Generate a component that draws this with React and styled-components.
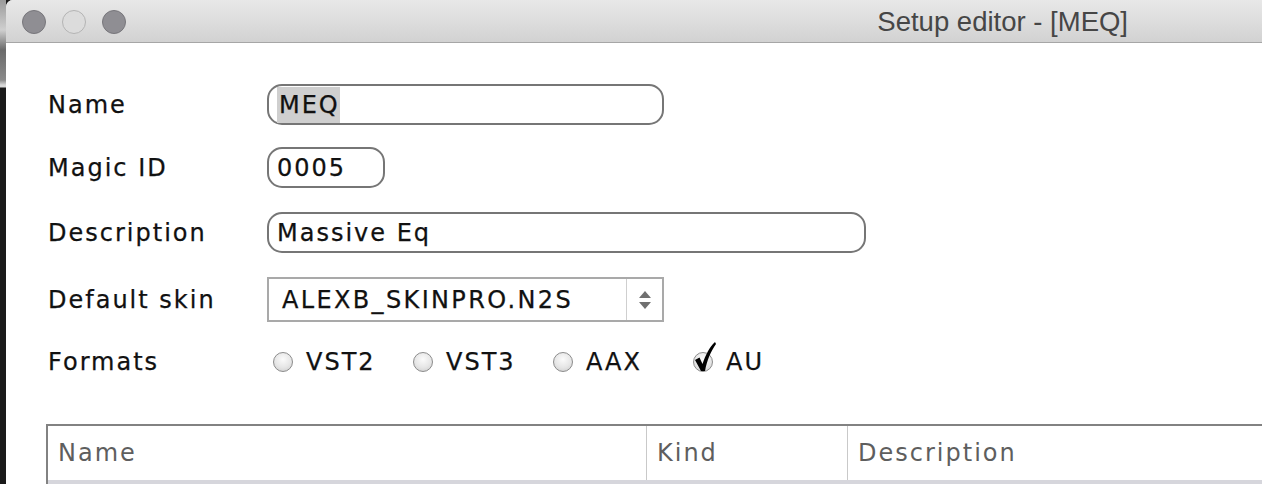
import React from "react";
import styled, { createGlobalStyle } from "styled-components";

const GlobalStyle = createGlobalStyle`
  html, body {
    margin: 0;
    padding: 0;
    background: #1a1a1a;
    overflow: hidden;
  }
  #root {
    width: 1262px;
    height: 484px;
  }
`;

const Screen = styled.div`
  display: flex;
  width: 1262px;
  height: 484px;
  overflow: hidden;
`;

const Edge = styled.div`
  width: 6px;
  flex: none;
  background: linear-gradient(
    to bottom,
    #9a9a9a 0px,
    #cfcfcf 30px,
    #6a6a6a 50px,
    #8a8a8a 80px,
    #d8d8d8 85px,
    #d8d8d8 87px,
    #1a1a1a 88px
  );
`;

const Window = styled.div`
  flex: 1;
  display: flex;
  flex-direction: column;
  background: #ffffff;
  border-top-left-radius: 7px;
  overflow: hidden;
  font-family: "DejaVu Sans", Verdana, sans-serif;
`;

const TitleBar = styled.div`
  box-sizing: border-box;
  height: 43px;
  flex: none;
  display: flex;
  align-items: center;
  padding: 2px 0 0 16px;
  background: linear-gradient(to bottom, #e8e8e8, #d2d2d2);
  border-bottom: 1px solid #a6a6a6;
`;

const Lights = styled.div`
  display: flex;
  gap: 16px;
`;

const Light = styled.div`
  box-sizing: border-box;
  width: 24px;
  height: 24px;
  border-radius: 50%;
  background: ${(p) => (p.$off ? "#dcdcdc" : "#8f8e93")};
  border: 1px solid ${(p) => (p.$off ? "#b4b4b4" : "#77767b")};
`;

const Title = styled.div`
  margin-left: auto;
  padding-right: 134px;
  font-family: "Liberation Sans", Arial, sans-serif;
  font-size: 27.5px;
  color: #464646;
`;

const Body = styled.div`
  padding: 41px 0 0 42px;
  display: flex;
  flex-direction: column;
`;

const Row = styled.div`
  display: flex;
  align-items: center;
  height: ${(p) => p.$h ?? 41}px;
  margin-bottom: ${(p) => p.$gap ?? 23}px;
`;

const Label = styled.div`
  width: 219px;
  flex: none;
  font-size: 24px;
  letter-spacing: 2px;
  color: #111;
  -webkit-text-stroke: 0.25px #111;
`;

const Field = styled.div`
  box-sizing: border-box;
  width: ${(p) => p.$w}px;
  height: 100%;
  border: 2px solid #767676;
  border-radius: 15px;
  display: flex;
  align-items: center;
  padding-left: 8px;
  font-size: 24px;
  letter-spacing: 2px;
  color: #111;
  -webkit-text-stroke: 0.25px #111;
`;

const Selected = styled.span`
  background: #cfcfcf;
  padding: 4px 0 4px 2px;
`;

const Combo = styled.div`
  box-sizing: border-box;
  width: 397px;
  height: 100%;
  border: 2px solid #a9a9a9;
  display: flex;
  align-items: stretch;
`;

const ComboText = styled.div`
  flex: 1;
  display: flex;
  align-items: center;
  padding-left: 13px;
  font-size: 24px;
  letter-spacing: 2.35px;
  color: #111;
  -webkit-text-stroke: 0.25px #111;
`;

const ComboArrows = styled.div`
  width: 35px;
  border-left: 1px solid #cfcfcf;
  display: flex;
  align-items: center;
  justify-content: center;
`;

const Options = styled.div`
  display: flex;
  align-items: center;
  padding-left: 6px;
`;

const Option = styled.div`
  display: flex;
  align-items: center;
  gap: 13px;
  width: ${(p) => p.$w || 140}px;
  font-size: 24px;
  letter-spacing: 2px;
  color: #111;
  -webkit-text-stroke: 0.25px #111;
`;

const Radio = styled.div`
  position: relative;
  width: 20px;
  height: 20px;
  box-sizing: border-box;
  border-radius: 50%;
  border: 1px solid #8c8c8c;
  background: radial-gradient(circle at 50% 35%, #fbfbfb 0%, #e6e6e6 55%, #c9c9c9 100%);
  flex: none;
`;

const Tick = styled.svg`
  position: absolute;
  left: -1px;
  top: -12px;
`;

const Table = styled.div`
  margin-top: 47px;
  margin-left: -2px;
  width: 1300px;
  border-top: 2px solid #828282;
  border-left: 2px solid #828282;
`;

const HeaderRow = styled.div`
  display: grid;
  grid-template-columns: 598px 201px 1fr;
  height: 54px;
  border-bottom: 4px solid #d6d6dc;
`;

const HeaderCell = styled.div`
  display: flex;
  align-items: center;
  padding-left: ${(p) => p.$pad || 10}px;
  border-left: ${(p) => (p.$first ? "none" : "1px solid #c9c9c9")};
  font-size: 24px;
  letter-spacing: 2px;
  color: #5e5e5e;
`;

const UpDown = () => (
  <svg width="14" height="22" viewBox="0 0 14 22">
    <path d="M7 2 L13 9 L1 9 Z" fill="#707070" />
    <path d="M7 20 L13 13 L1 13 Z" fill="#707070" />
  </svg>
);

const Check = () => (
  <Tick width="24" height="32" viewBox="0 0 24 32">
    <path
      d="M2 19 L6.5 16.5 L9.5 23 C12.5 14 16.5 6 22 1 L23 3 C18 10 14 19 12 30 L8 30 Z"
      fill="#000"
    />
  </Tick>
);

const formats = [
  { name: "VST2", w: 140 },
  { name: "VST3", w: 140 },
  { name: "AAX", w: 140 },
  { name: "AU", w: 80, on: true },
];

export default function App() {
  return (
    <>
      <GlobalStyle />
      <Screen>
        <Edge />
        <Window>
          <TitleBar>
            <Lights>
              <Light />
              <Light $off />
              <Light />
            </Lights>
            <Title>Setup editor - [MEQ]</Title>
          </TitleBar>
          <Body>
            <Row $h={41} $gap={22}>
              <Label>Name</Label>
              <Field $w={397}>
                <Selected>MEQ</Selected>
              </Field>
            </Row>
            <Row $h={41} $gap={24}>
              <Label>Magic ID</Label>
              <Field $w={118}>0005</Field>
            </Row>
            <Row $h={41} $gap={24}>
              <Label>Description</Label>
              <Field $w={599}>Massive Eq</Field>
            </Row>
            <Row $h={45} $gap={25}>
              <Label>Default skin</Label>
              <Combo>
                <ComboText>ALEXB_SKINPRO.N2S</ComboText>
                <ComboArrows>
                  <UpDown />
                </ComboArrows>
              </Combo>
            </Row>
            <Row $h={30} $gap={0}>
              <Label>Formats</Label>
              <Options>
                {formats.map((f) => (
                  <Option key={f.name} $w={f.w}>
                    <Radio>{f.on && <Check />}</Radio>
                    {f.name}
                  </Option>
                ))}
              </Options>
            </Row>
            <Table>
              <HeaderRow>
                <HeaderCell $first>Name</HeaderCell>
                <HeaderCell>Kind</HeaderCell>
                <HeaderCell>Description</HeaderCell>
              </HeaderRow>
            </Table>
          </Body>
        </Window>
      </Screen>
    </>
  );
}
